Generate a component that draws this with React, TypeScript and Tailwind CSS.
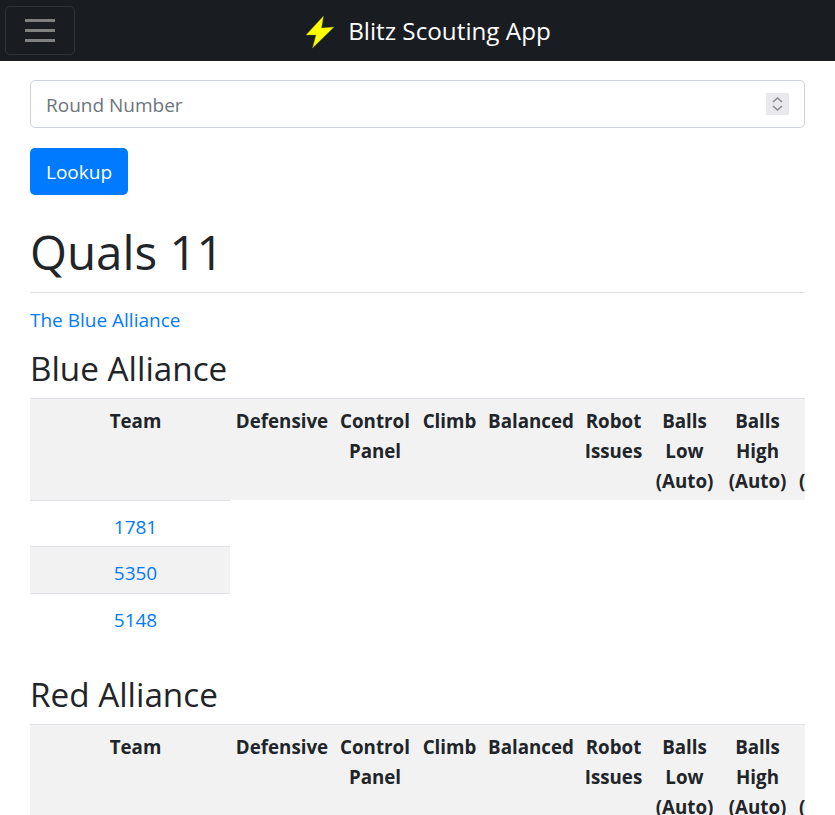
const columns = [
  { label: 'Defensive', width: 'w-[104px]' },
  { label: 'Control Panel', width: 'w-[82px]' },
  { label: 'Climb', width: 'w-[67px]' },
  { label: 'Balanced', width: 'w-[96px]' },
  { label: 'Robot Issues', width: 'w-[69px]' },
  { label: 'Balls Low (Auto)', width: 'w-[73px]' },
  { label: 'Balls High (Auto)', width: 'w-[73px]' },
  { label: 'Balls Low (Teleop)', width: 'w-[80px]' },
  { label: 'Balls High (Teleop)', width: 'w-[80px]' },
];

function AllianceTable({ title, teams }: { title: string; teams: string[] }) {
  return (
    <section className="mb-[35px]">
      <h2 className="text-[33.25px] leading-[38px] font-normal mb-[11px]">{title}</h2>
      <div className="overflow-x-hidden">
        <table className="border-collapse table-fixed w-[924px] text-center">
          <thead>
            <tr className="bg-[#f2f2f2] border-t border-[#dee2e6] align-top text-[18.75px]">
              <th className="w-[200px] pl-[17px] pr-[6px] pt-[7px] pb-[4px] font-bold">Team</th>
              {columns.map((c) => (
                <th key={c.label} className={`${c.width} px-[5px] pt-[7px] pb-[4px] font-bold`}>
                  {c.label}
                </th>
              ))}
            </tr>
          </thead>
          <tbody>
            {teams.map((t, i) => (
              <tr key={t}>
                <td className={`border-t border-[#dee2e6] pl-[11px] pt-[11px] ${i === 0 ? 'pb-[4px]' : 'pb-[5px]'} ${i === 1 ? 'bg-[#f2f2f2]' : ''}`}>
                  <a href="#" className="text-[#007bff]">{t}</a>
                </td>
              </tr>
            ))}
          </tbody>
        </table>
      </div>
    </section>
  );
}

export default function App() {
  return (
    <div className="font-['Open_Sans',sans-serif] text-[19px] leading-[30px] text-[#212529] bg-white">
      <nav className="relative h-[61px] bg-[#191d21] flex items-center pl-[5px]">
        <button className="w-[70px] h-[49px] border border-[#2e3236] rounded-[5px] flex flex-col justify-center items-center gap-[7px]">
          <span className="block w-[30px] h-[3px] bg-[#808080]" />
          <span className="block w-[30px] h-[3px] bg-[#808080]" />
          <span className="block w-[30px] h-[3px] bg-[#808080]" />
        </button>
        <a href="#" className="flex-1 flex justify-center items-center gap-[13px] text-[24.25px] text-white pr-[54px] pt-[1px]">
          <svg viewBox="0 0 30 34" className="w-[30px] h-[34px] mt-[2px]">
            <path d="M18.5 1 L1 20 L11 20 L7.5 33 L29 12 L16.5 13 Z" fill="#ffff00" stroke="#8a8a20" strokeWidth="0.4" />
          </svg>
          Blitz Scouting App
        </a>
      </nav>

      <main className="px-[30px] pt-[19px]">
        <div className="relative mb-[20px]">
          <input
            type="text"
            placeholder="Round Number"
            className="w-full h-[48px] border border-[#ced4da] rounded-[5px] px-[15px] pt-[1px] placeholder:text-[#6c757d] outline-none"
          />
          <span className="absolute right-[16px] top-[13px] w-[23px] h-[22px] bg-[#e9e9ed]">
            <svg viewBox="0 0 23 22" className="w-[23px] h-[22px]" fill="none" stroke="#8a8a96" strokeWidth="1.6">
              <path d="M7 9 L11.5 5 L16 9" />
              <path d="M7 13 L11.5 17 L16 13" />
            </svg>
          </span>
        </div>
        <button className="h-[47px] w-[98px] pt-[1px] bg-[#007bff] text-white rounded-[5px]">Lookup</button>

        <h1 className="text-[47.5px] leading-[60px] font-normal mt-[27px] pb-[10px] border-b border-[#dee2e6] mb-[12px]">
          Quals 11
        </h1>
        <a href="#" className="text-[#007bff] block mb-[14px]">The Blue Alliance</a>

        <AllianceTable title="Blue Alliance" teams={['1781', '5350', '5148']} />
        <AllianceTable title="Red Alliance" teams={['1024', '2056', '4414']} />
      </main>
    </div>
  );
}
